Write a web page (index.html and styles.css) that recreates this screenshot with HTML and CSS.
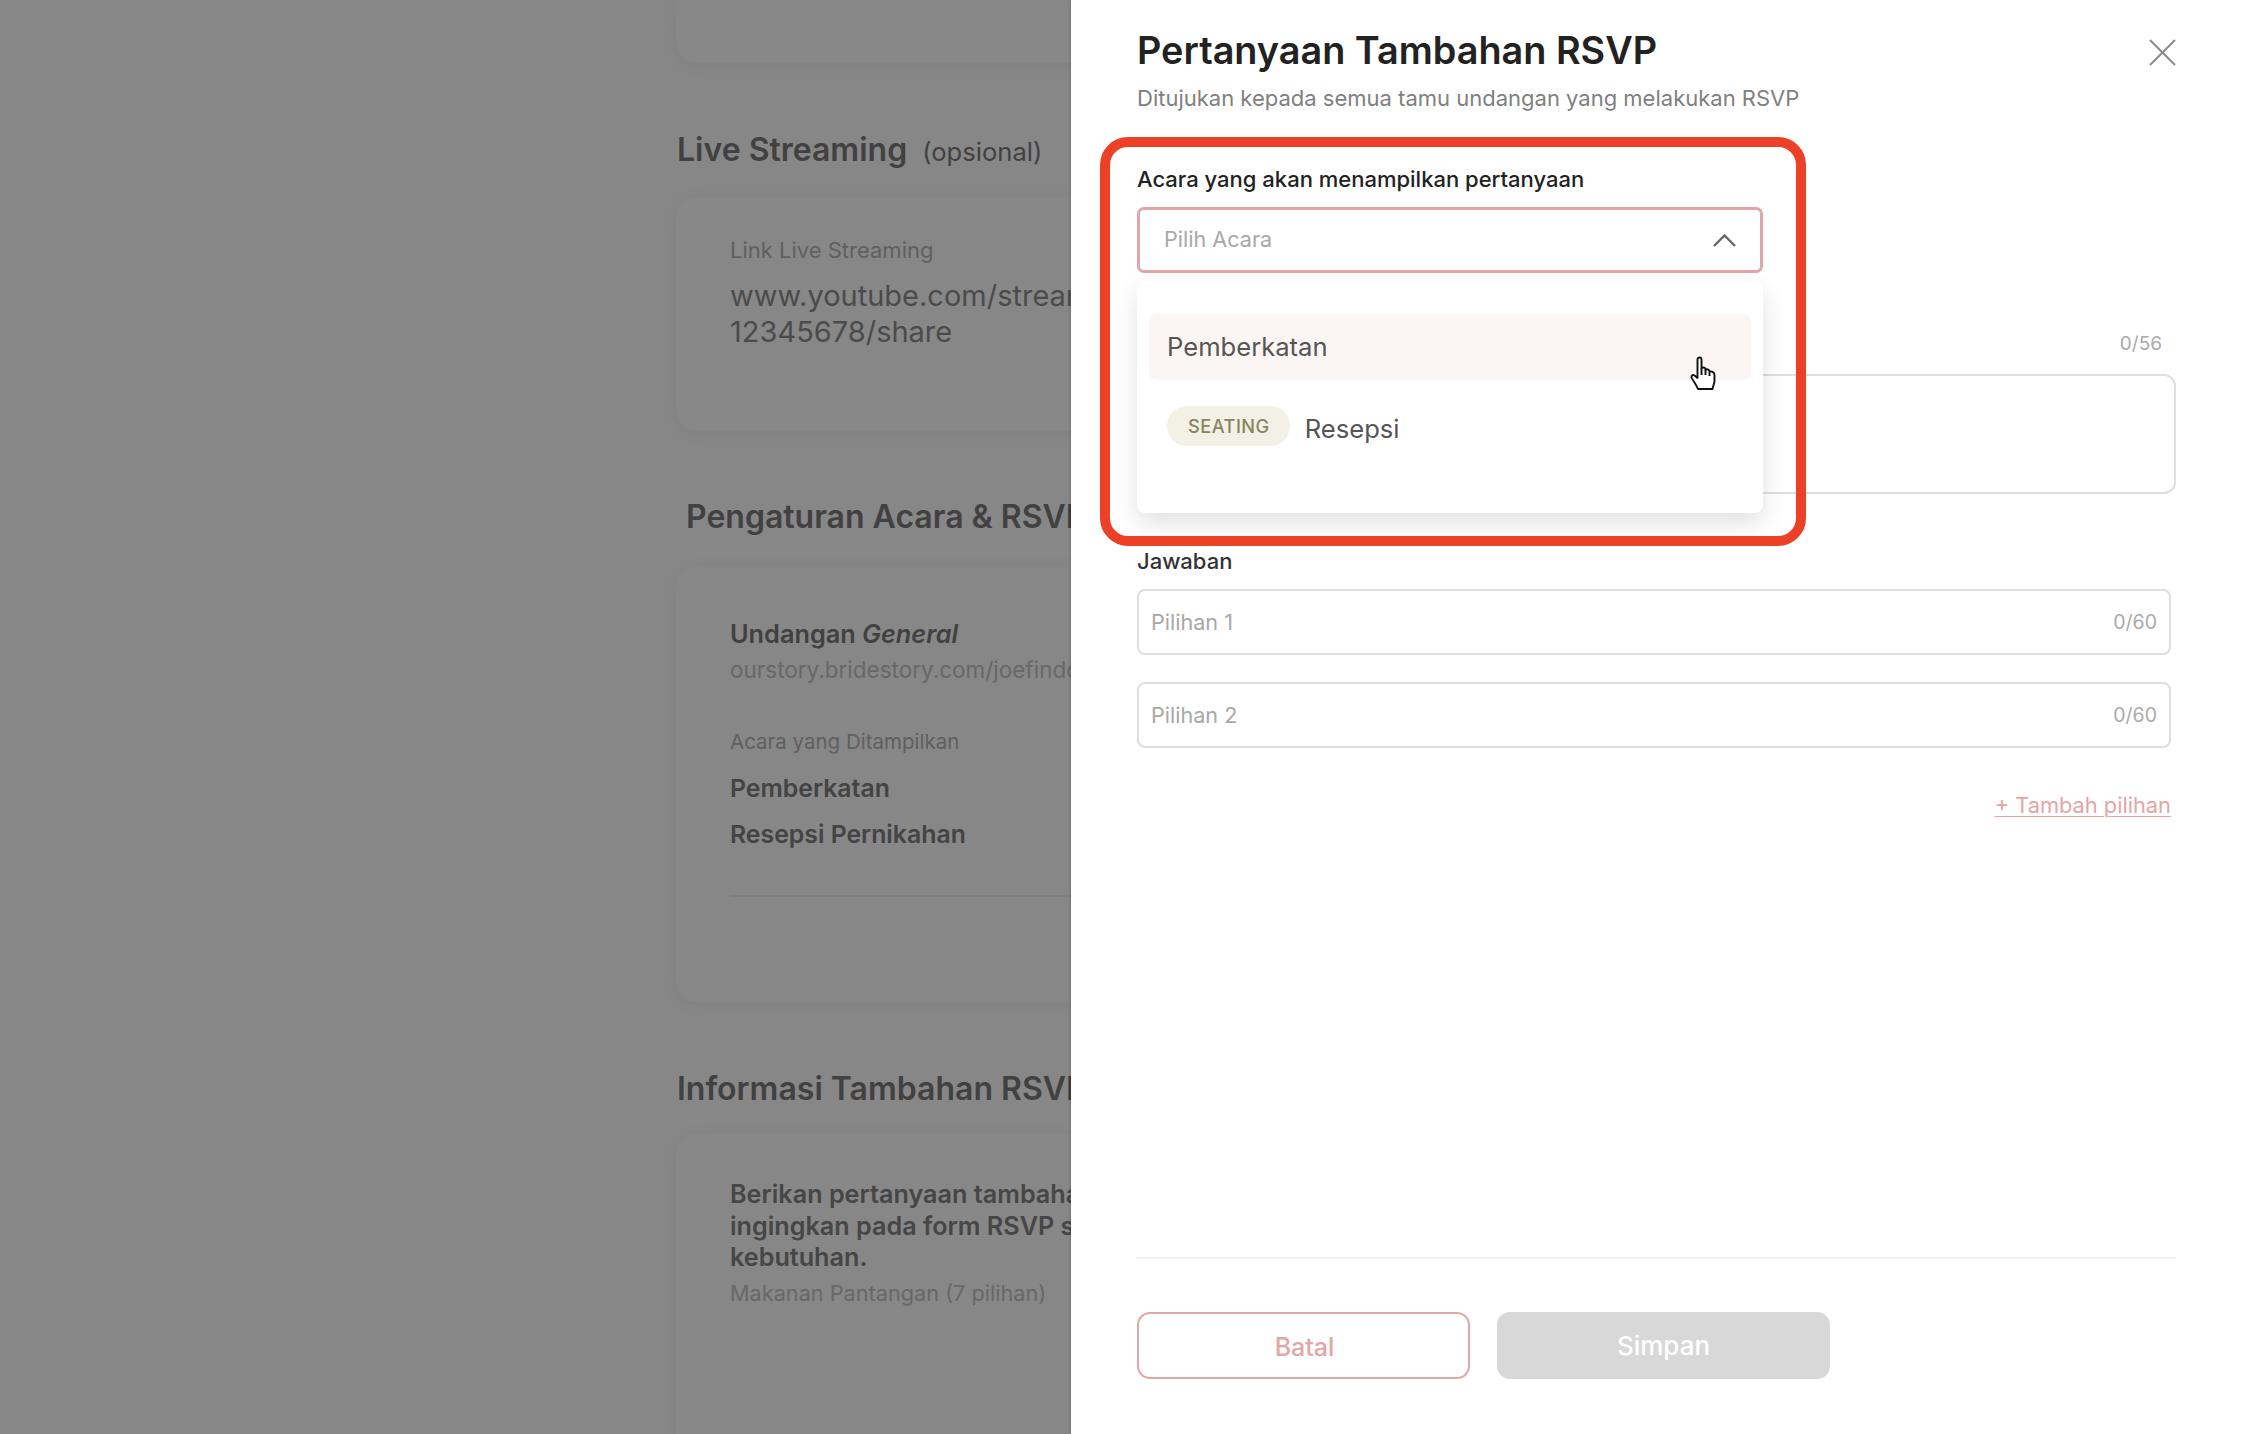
FILE: index.html
```html
<!DOCTYPE html>
<html lang="id">
<head>
<meta charset="utf-8">
<title>Pertanyaan Tambahan RSVP</title>
<link rel="stylesheet" href="styles.css">
</head>
<body>
<div class="page">
  <div class="backdrop">
    <div class="bg-col">
      <div class="card card-a"></div>
      <h2 class="sec sec-live">Live Streaming <span class="opt">(opsional)</span></h2>
      <div class="card card-b">
        <div class="cap">Link Live Streaming</div>
        <div class="url">www.youtube.com/stream/<br>12345678/share</div>
      </div>
      <h2 class="sec sec-acara">Pengaturan Acara &amp; RSVP</h2>
      <div class="card card-c">
        <div class="inv">Undangan <em>General</em></div>
        <div class="link">ourstory.bridestory.com/joefindo</div>
        <div class="cap cap-acara">Acara yang Ditampilkan</div>
        <div class="ev ev-1">Pemberkatan</div>
        <div class="ev ev-2">Resepsi Pernikahan</div>
        <div class="rule"></div>
      </div>
      <h2 class="sec sec-info">Informasi Tambahan RSVP</h2>
      <div class="card card-d">
        <div class="para">Berikan pertanyaan tambahan yang Anda<br>ingingkan pada form RSVP sesuai<br>kebutuhan.</div>
        <div class="link link-d">Makanan Pantangan (7 pilihan)</div>
      </div>
    </div>
  </div>

  <aside class="panel">
    <header class="head">
      <h1 class="title">Pertanyaan Tambahan RSVP</h1>
      <svg class="close" width="27" height="27" viewBox="0 0 27 27"><path d="M1 1L26 26M26 1L1 26"/></svg>
    </header>
    <p class="sub">Ditujukan kepada semua tamu undangan yang melakukan RSVP</p>

    <label class="label label-event">Acara yang akan menampilkan pertanyaan</label>
    <div class="select-wrap">
      <div class="select">
        <span class="ph">Pilih Acara</span>
        <svg class="chev" width="23" height="13" viewBox="0 0 23 13"><path d="M1 12L11.5 1.5L22 12"/></svg>
      </div>
      <div class="menu">
        <div class="item item-hover">Pemberkatan</div>
        <div class="item item-seat"><span class="badge">SEATING</span><span>Resepsi</span></div>
      </div>
    </div>

    <div class="count-row"><span class="count">0/56</span></div>
    <div class="textarea"></div>

    <label class="label label-ans">Jawaban</label>
    <div class="input"><span class="ph-sm">Pilihan 1</span><span class="count-in">0/60</span></div>
    <div class="input input-2"><span class="ph-sm">Pilihan 2</span><span class="count-in">0/60</span></div>
    <div class="add-row"><a class="add">+ Tambah pilihan</a></div>

    <footer class="foot">
      <button class="btn btn-cancel">Batal</button>
      <button class="btn btn-save">Simpan</button>
    </footer>

    <div class="annot"></div>
    <svg class="cursor" width="26" height="34" viewBox="0 0 26 34"><path class="hand" d="M8 33C6 28 3 25 1.5 21.5C1 19.5 3 18.5 4.5 19.5L7.5 22V3.5C7.5 .8 11.5 .8 11.5 3.5V12C13.5 11 15.5 11.5 15.5 13.5C17.5 13 19.5 13.5 19.5 15.5C22 15 24.5 16.5 24.5 19V25C24.5 27.5 23 30 22.5 33Z"/><path class="hand" d="M11.5 12V19M15.5 13.5V19M19.5 15.5V20"/></svg>
  </aside>
</div>
</body>
</html>
```

FILE: styles.css
```css
* { box-sizing: border-box; }
html, body { margin: 0; padding: 0; }
body { font-family: Inter, "Noto Sans", sans-serif; background: #fff; }
.page { display: flex; width: 2254px; height: 1434px; overflow: hidden; }

/* dimmed page behind the drawer */
.backdrop { position: relative; flex: 0 0 1071px; overflow: hidden; padding-left: 676px; background: #fff; }
.backdrop::after { content: ""; position: absolute; inset: 0; background: rgba(0, 0, 0, .47); }
.bg-col { width: 760px; color: #808080; }
.card { border-radius: 20px; box-shadow: 0 2px 18px rgba(0, 0, 0, .05); padding-left: 54px; background: #fff; }
.card-a { height: 63px; border-radius: 0 0 20px 20px; }
.card-b { height: 234px; padding-top: 39px; }
.card-c { height: 435px; padding-top: 52px; }
.card-d { height: 420px; padding-top: 45px; }
.sec { margin: 0; font-size: 32px; line-height: 40px; font-weight: 600; color: #7c7c7c; padding-left: 1px; white-space: nowrap; }
.sec-live { margin: 67px 0 25px; }
.sec-acara { margin: 66px 0 30px; padding-left: 10px; }
.sec-info { margin: 67px 0 25px; }
.opt { font-size: 25.6px; font-weight: 400; margin-left: 7px; }
.cap { font-size: 22px; line-height: 28px; color: #b5b5b5; }
.url { margin-top: 14px; font-size: 29px; line-height: 36px; color: #8f8f8f; white-space: nowrap; }
.inv { font-size: 25.3px; line-height: 30px; font-weight: 600; color: #7c7c7c; }
.link { margin-top: 7px; font-size: 22.5px; line-height: 28px; color: #c4c4c4; white-space: nowrap; }
.cap-acara { margin-top: 44px; font-size: 20.5px; }
.ev { font-size: 24.8px; line-height: 32px; font-weight: 600; color: #808080; }
.ev-1 { margin-top: 16px; }
.ev-2 { margin-top: 14px; }
.rule { margin-top: 45px; height: 2px; background: #f0f0f0; }
.para { font-size: 25.2px; line-height: 31.5px; font-weight: 600; color: #858585; white-space: nowrap; }
.link-d { margin-top: 5px; font-size: 21.7px; }

/* drawer */
.panel { position: relative; flex: 1; display: flex; flex-direction: column; padding: 26px 78px 55px 66px; background: #fff; box-shadow: -1px 0 2px rgba(0, 0, 0, .15); }
.head { display: flex; justify-content: space-between; align-items: flex-start; }
.title { margin: 0; font-size: 37.8px; line-height: 48px; font-weight: 600; color: #222; white-space: nowrap; }
.close { margin-top: 13px; }
.close path { fill: none; stroke: #8a8a8a; stroke-width: 2; }
.sub { margin: 9px 0 0; font-size: 22px; line-height: 30px; color: #808080; }
.label { display: block; font-size: 22px; line-height: 28px; font-weight: 500; color: #222; }
.label-event { margin-top: 52px; }
.label-ans { margin-top: 53px; color: #333; }
.select-wrap { position: relative; margin-top: 14px; width: 626px; }
.select { height: 66px; display: flex; align-items: center; justify-content: space-between; padding: 0 24px 0 24px; border: 3px solid #e3a6a6; border-radius: 7px; background: #fff; }
.ph { font-size: 21.6px; color: #a8a8a8; padding-bottom: 2px; }
.chev path { fill: none; stroke: #666; stroke-width: 2.4; }
.menu { position: absolute; left: 0; top: 74px; width: 626px; height: 232px; padding: 33px 12px 0 12px; background: #fff; border-radius: 8px; box-shadow: 0 10px 24px rgba(0, 0, 0, .12); z-index: 2; }
.item { display: flex; align-items: center; height: 66px; padding-left: 18px; border-radius: 8px; font-size: 25.6px; color: #555; }
.item-hover { background: #fbf6f4; padding-bottom: 2px; }
.item-seat { margin-top: 15px; gap: 15px; }
.badge { display: flex; align-items: center; height: 40px; margin-top: -4px; padding: 0 20px 0 21px; border-radius: 20px; background: #f3f0e6; font-size: 18.2px; font-weight: 500; letter-spacing: .5px; color: #88845e; }
.count-row { display: flex; justify-content: flex-end; margin-top: 56px; padding-right: 14px; height: 28px; align-items: center; }
.count { font-size: 19px; color: #aaa; }
.textarea { margin-top: 17px; height: 120px; border: 2px solid #dedede; border-radius: 12px; }
.input { display: flex; justify-content: space-between; align-items: center; width: 1034px; height: 66px; margin-top: 14px; padding: 0 12px; border: 2px solid #dedede; border-radius: 8px; }
.input-2 { margin-top: 27px; }
.ph-sm { font-size: 21.6px; color: #a8a8a8; }
.count-in { font-size: 19.5px; color: #aaa; }
.add-row { display: flex; justify-content: flex-end; width: 1034px; margin-top: 43px; }
.add { font-size: 21.8px; line-height: 28px; color: #e3a6a6; text-decoration: underline; text-underline-offset: 3px; text-decoration-thickness: 1px; }
.foot { display: flex; gap: 27px; margin-top: auto; padding-top: 53px; border-top: 2px solid #f1f1f1; }
.btn { width: 333px; height: 67px; border-radius: 13px; font-family: inherit; font-size: 25px; font-weight: 500; }
.btn-cancel { border: 2px solid #e3a6a6; background: #fff; color: #e3a6a6; padding: 3px 0 0 2px; }
.btn-save { border: 0; background: #d8d8d8; color: #fff; font-size: 26px; }

/* annotation + pointer drawn over the drawer */
.annot { position: absolute; left: 29px; top: 137px; width: 706px; height: 409px; border: 10px solid #ec4126; border-radius: 28px; pointer-events: none; z-index: 3; }
.cursor { position: absolute; left: 619px; top: 356px; z-index: 4; }
.hand { fill: #fff; stroke: #111; stroke-width: 1.9; stroke-linejoin: round; }
```
